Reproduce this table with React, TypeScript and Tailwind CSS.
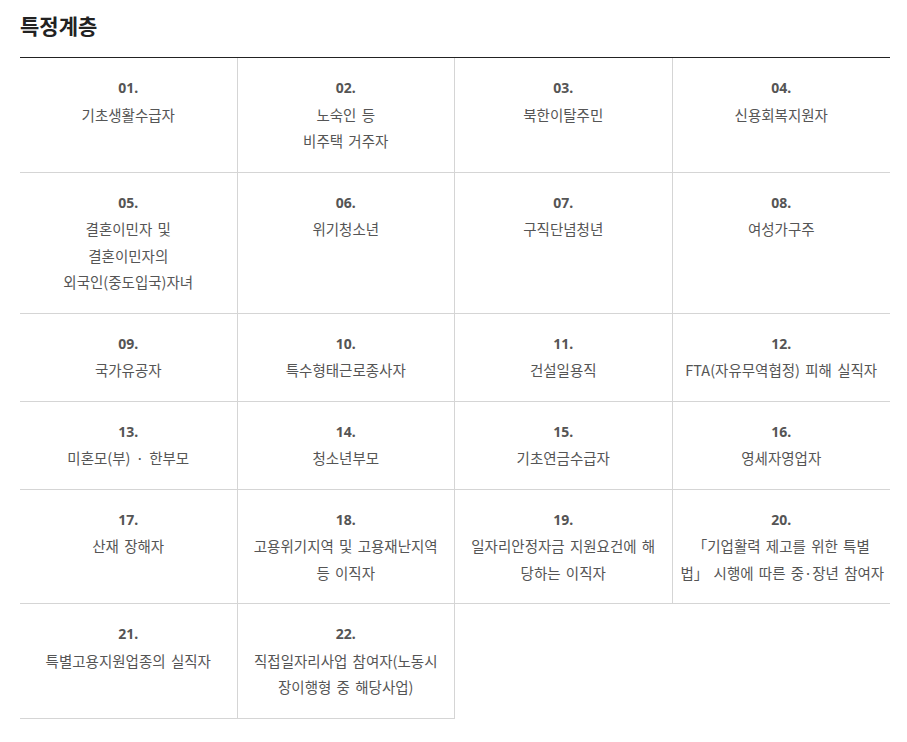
const items: string[][] = [
  ['기초생활수급자'],
  ['노숙인 등', '비주택 거주자'],
  ['북한이탈주민'],
  ['신용회복지원자'],
  ['결혼이민자 및', '결혼이민자의', '외국인(중도입국)자녀'],
  ['위기청소년'],
  ['구직단념청년'],
  ['여성가구주'],
  ['국가유공자'],
  ['특수형태근로종사자'],
  ['건설일용직'],
  ['FTA(자유무역협정) 피해 실직자'],
  ['미혼모(부) · 한부모'],
  ['청소년부모'],
  ['기초연금수급자'],
  ['영세자영업자'],
  ['산재 장해자'],
  ['고용위기지역 및 고용재난지역', '등 이직자'],
  ['일자리안정자금 지원요건에 해', '당하는 이직자'],
  ['「기업활력 제고를 위한 특별', '법」 시행에 따른 중·장년 참여자'],
  ['특별고용지원업종의 실직자'],
  ['직접일자리사업 참여자(노동시', '장이행형 중 해당사업)'],
];

export default function App() {
  return (
    <div className="min-h-screen bg-white pt-[10px] pl-5 font-['Noto_Sans_CJK_KR','Noto_Sans',sans-serif]">
      <h2 className="text-[21px] leading-[30px] font-bold text-[#222]">특정계층</h2>
      <div className="mt-[17px] grid w-[870px] grid-cols-4 border-t border-[#222]">
        {items.map((lines, i) => (
          <div
            key={i}
            className="border-b border-r border-[#d5d5d5] px-[8px] pt-[17px] pb-[17px] text-center text-[14.5px] leading-[26.5px] text-[#555] [word-spacing:2px] [&:nth-child(4n)]:border-r-0"
          >
            <p className="text-[14px] font-bold font-['Noto_Sans','Noto_Sans_CJK_KR',sans-serif]">
              {String(i + 1).padStart(2, '0')}.
            </p>
            {lines.map((l, j) => (
              <p key={j} className="whitespace-nowrap">{l}</p>
            ))}
          </div>
        ))}
      </div>
    </div>
  );
}
